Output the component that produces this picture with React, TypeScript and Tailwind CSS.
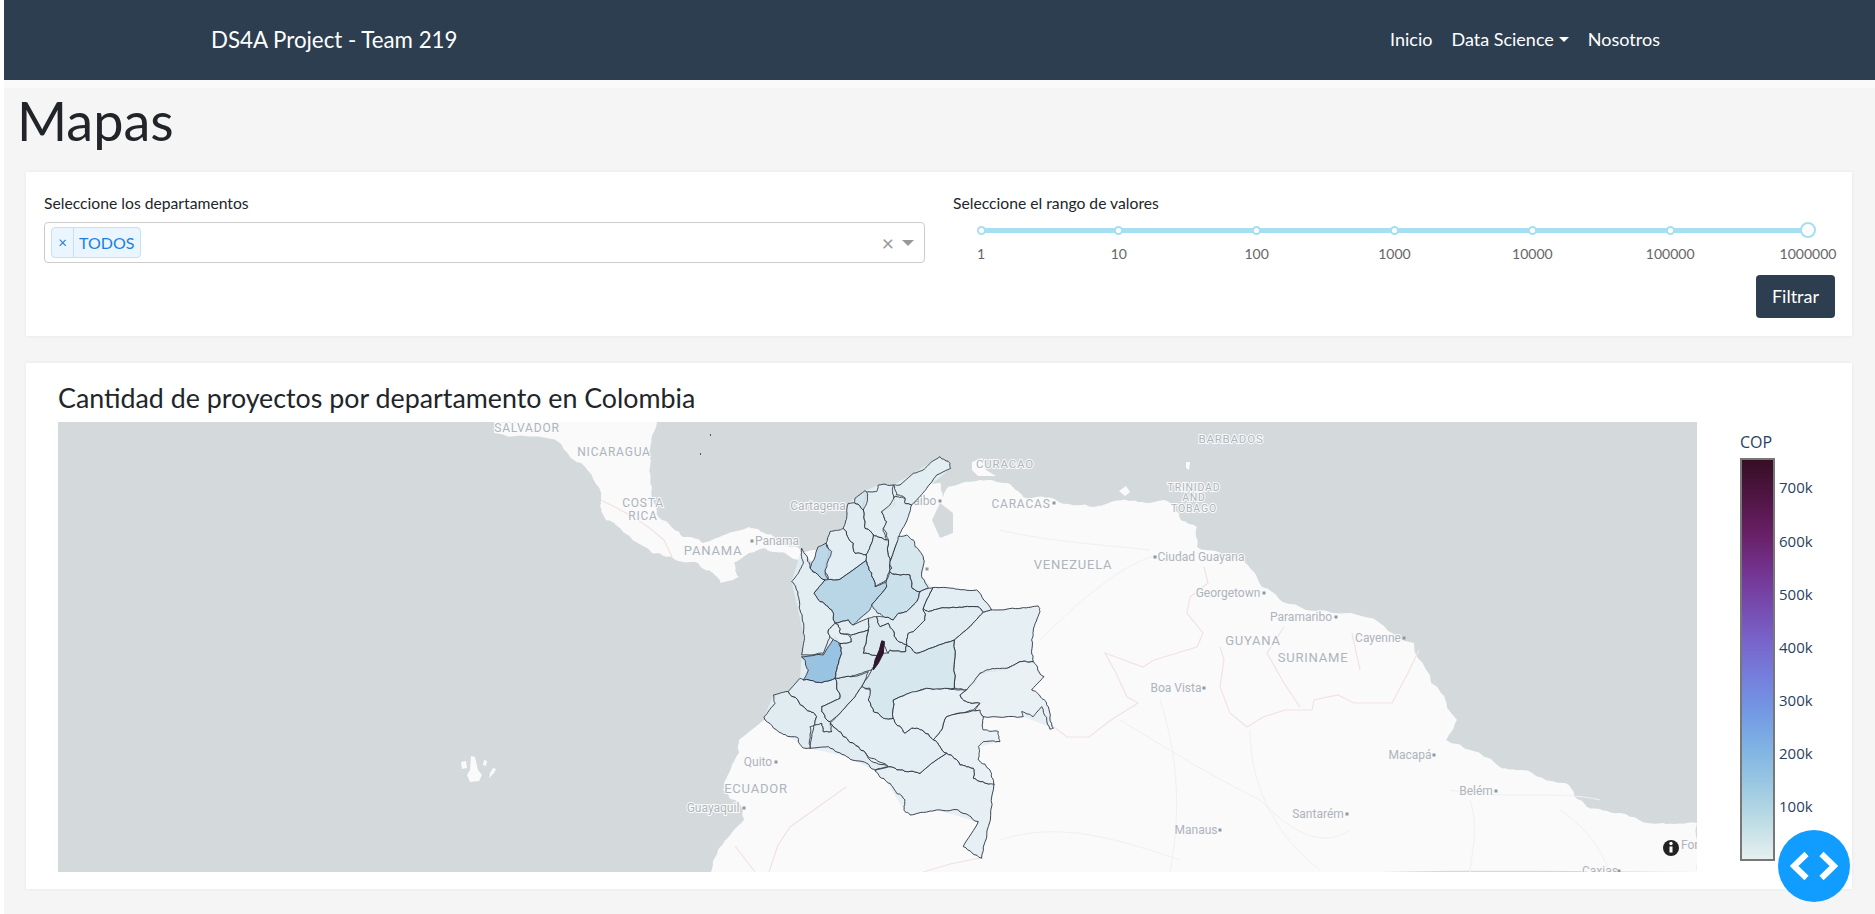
const ticks = ["1", "10", "100", "1000", "10000", "100000", "1000000"];
const legend = ["700k", "600k", "500k", "400k", "300k", "200k", "100k"];

// page coordinates for the basemap
const land = [
  "494,422 657,422 649,453 652,487 662,520 683,537 703,543 729,533 749,527 764,533 785,545 805,552 830,600 830,650 810,700 764,720 739,740 739,753 729,773 723,790 739,803 744,820 734,830 718,850 711,872 1697,872 1697,823 1663,823 1620,813 1587,807 1565,783 1522,770 1495,763 1446,740 1457,720 1441,693 1414,643 1365,617 1300,607 1262,587 1240,560 1197,547 1197,527 1181,520 1164,500 1126,500 1094,507 1056,500 1023,497 1007,483 980,480 948,487 943,497 940,483 928,483 900,520 860,540 805,552 802,560 785,553 764,548 749,553 734,563 739,577 721,583 713,573 698,563 672,557 652,553 616,525 606,520 601,500 581,463 560,443 494,433",
  "471,756 475,757 478,770 482,775 479,781 470,782 467,775 470,770",
  "461,762 466,761 467,768 462,769",
  "484,760 487,761 486,766 483,765",
  "493,768 496,769 494,773 491,776 489,778 490,773",
  "972,462 982,458 986,470 996,476 978,476 972,470",
  "1119,491 1126,486 1130,492 1125,496",
  "1178,490 1182,487 1182,493",
  "1186,462 1190,462 1189,470 1186,468",
];
const lake = "940,503 932,520 940,538 953,533 953,513";

const borders = [
  "M601 500C620 510 640 518 664 540L672 557",
  "M846 787 790 827 778 845 769 872",
  "M735 846 755 872",
  "M980 858 950 864 923 872",
  "M1204 567 1208 583 1190 597 1187 613 1203 633 1197 647 1154 660 1143 667 1105 653 1116 673 1127 697 1138 703 1111 720 1089 737 1067 737 1045 720",
  "M1220 647 1224 660 1220 687 1230 713 1247 727 1263 717 1285 710 1312 710 1314 700 1338 695 1354 703 1392 703 1408 673 1419 650",
  "M1284 627 1267 653 1284 683 1300 707",
  "M1360 670 1352 633",
];
const roads = [
  "M1040 640C1090 590 1130 560 1160 555",
  "M1000 530C1040 540 1100 545 1150 550",
  "M1120 720C1170 750 1200 770 1260 800 1290 830 1320 850 1350 830",
  "M1160 700C1180 760 1180 820 1170 872",
  "M1250 730C1250 790 1280 840 1320 870",
  "M1450 790C1500 800 1560 790 1600 800",
  "M1470 800C1480 830 1470 860 1470 872",
  "M1000 840C1060 820 1120 840 1180 860",
  "M1560 810C1590 830 1600 850 1610 872",
];

const labels: [string, number, number, number][] = [
  ["SALVADOR", 527, 432, 12],
  ["NICARAGUA", 614, 456, 12],
  ["COSTA", 643, 507, 12],
  ["RICA", 643, 520, 12],
  ["PANAMA", 713, 555, 13],
  ["Panama", 777, 545, 12],
  ["Cartagena", 818, 510, 12],
  ["Quito", 758, 766, 12],
  ["ECUADOR", 756, 793, 13],
  ["Guayaquil", 713, 812, 12],
  ["BARBADOS", 1231, 443, 11.5],
  ["CURACAO", 1005, 468, 11.5],
  ["TRINIDAD", 1194, 491, 10.5],
  ["AND", 1194, 501, 10.5],
  ["TOBAGO", 1194, 512, 10.5],
  ["CARACAS", 1021, 508, 12],
  ["Maracaibo", 908, 505, 12],
  ["VENEZUELA", 1073, 569, 13],
  ["Ciudad Guayana", 1201, 561, 12],
  ["Georgetown", 1228, 597, 12],
  ["Paramaribo", 1301, 621, 12],
  ["GUYANA", 1253, 645, 13],
  ["SURINAME", 1313, 662, 13],
  ["Cayenne", 1378, 642, 12],
  ["Boa Vista", 1176, 692, 12],
  ["Macapá", 1410, 759, 12],
  ["Belém", 1476, 795, 12],
  ["Santarém", 1318, 818, 12],
  ["Manaus", 1196, 834, 12],
  ["Caxias", 1600, 875, 12],
  ["COLOMBIA", 917, 662, 13],
];
const cities = [
  [752, 541], [776, 762], [744, 808], [1054, 503], [940, 501], [1155, 557],
  [1264, 593], [1336, 617], [1404, 638], [1204, 688], [1434, 755], [1496, 791],
  [1347, 814], [1220, 830], [1619, 871], [927, 569],
];

// everything below is traced from the 3x crop of Colombia (origin at 740,440)
const outline =
  "600,50 632,85 560,145 515,195 480,280 475,290 500,285 550,350 545,410 578,443 710,450 755,510 895,498 875,600 880,665 912,710 875,750 925,800 940,865 850,830 730,830 730,870 780,905 715,920 715,960 762,1035 725,1255 670,1220 715,1145 590,1110 495,1115 440,1025 405,992 320,950 210,925 125,880 72,832 100,765 145,755 180,715 185,650 190,580 155,425 185,325 210,385 235,320 258,310 270,275 310,265 320,235 325,190 345,175 375,152 415,135 460,135 520,100";

const departments: [string, string][] = [
  ["#e3eef3", "600,50 630,70 632,85 590,105 560,145 530,180 515,195 495,190 495,175 470,165 460,135 480,135 520,100 550,90 575,65"],
  ["#e3eef3", "460,135 415,135 410,155 380,155 370,210 375,265 400,285 440,300 430,265 440,245 425,215 465,195 460,165"],
  ["#e0ecf1", "465,168 495,175 495,190 515,195 505,230 480,280 470,310 450,365 455,385 450,390 445,300 430,265 440,245 425,215 450,195"],
  ["#d2e4ec", "345,175 375,152 383,165 380,190 370,210 345,190"],
  ["#e0ecf1", "325,190 345,190 370,210 375,265 400,285 390,320 378,345 345,340 340,310 310,265 320,235"],
  ["#dbe9ef", "400,285 440,300 445,300 450,390 440,420 405,440 395,400 378,362 378,345 390,320"],
  ["#e3eef3", "270,275 300,270 310,265 340,310 345,340 378,345 378,362 300,418 265,418 255,395 265,340 258,310"],
  ["#b8d6e6", "258,310 275,335 265,360 255,395 265,420 255,420 210,385 235,320"],
  ["#b5d4e4", "378,362 395,400 405,440 440,425 440,440 395,495 390,510 360,535 340,555 325,540 285,550 275,510 240,485 222,460 255,420 265,418 300,418"],
  ["#c8dee8", "450,395 480,405 510,405 515,440 540,455 530,485 500,515 475,520 460,540 430,530 400,505 395,495 440,440 440,420"],
  ["#d6e6ed", "475,290 500,285 520,300 525,320 550,350 545,410 565,445 540,455 515,440 510,405 480,405 450,395 450,390 455,385 450,365 470,310"],
  ["#e3eef3", "578,443 640,445 710,450 755,510 730,517 710,500 650,503 600,505 565,515 550,505"],
  ["#e0ecf1", "565,445 578,443 550,505 555,540 520,575 505,580 500,615 470,600 445,550 420,560 410,530 430,530 460,540 475,520 500,515 530,485 540,455"],
  ["#dfebf0", "550,505 565,515 600,505 650,503 710,500 730,517 690,560 643,600 570,625 530,640 500,615 505,580 520,575 555,540"],
  ["#e6eff3", "730,517 760,510 850,503 895,498 900,515 880,570 875,600 880,665 840,665 790,690 720,700 705,730 680,750 643,745 643,600 690,560"],
  ["#dbe9ef", "385,535 410,530 420,560 445,550 470,600 500,615 497,635 450,630 445,640 433,605 425,603 415,650 370,640 385,570"],
  ["#d6e6ed", "500,615 530,640 570,625 643,600 643,745 560,745 510,760 460,780 460,835 430,835 400,815 385,780 390,745 365,740 395,690 410,670 430,640 445,640 450,630 497,635"],
  ["#e6f0f4", "460,780 520,755 560,745 643,748 680,750 660,765 680,785 720,790 700,810 620,830 605,870 580,900 545,870 515,865 495,880 470,855 460,835"],
  ["#e9f1f4", "680,750 720,700 740,690 800,685 840,665 880,665 912,710 875,750 905,775 925,800 940,865 930,868 905,800 880,830 845,815 850,830 730,830 705,810 720,790 680,785 660,765"],
  ["#e9f1f4", "720,810 730,830 730,870 775,875 780,905 730,905 715,920 715,960 750,990 762,1035 735,1030 700,1015 700,985 660,975 620,940 580,900 605,870 620,830"],
  ["#e6eff3", "620,940 660,975 700,985 700,1015 735,1030 762,1032 745,1160 725,1255 670,1220 715,1145 655,1110 590,1110 510,1125 495,1115 495,1080 470,1060 440,1025 405,992 445,980 500,995 540,1000 575,970"],
  ["#e3eef3", "365,740 390,750 385,780 400,815 430,835 460,835 470,855 495,880 515,865 545,870 580,900 620,940 575,970 540,1000 500,995 445,980 395,955 355,920 310,890 270,850 295,825 345,770"],
  ["#e0ecf1", "270,850 310,890 355,920 390,960 445,980 405,990 380,970 320,950 265,920 210,925 220,855 245,850 250,875 275,875"],
  ["#dfebf0", "72,832 105,790 100,765 145,755 195,805 230,830 225,855 210,860 210,925 185,920 175,895 125,880"],
  ["#e0ecf1", "180,715 190,720 245,728 285,715 300,775 245,800 245,815 270,845 275,875 250,875 245,850 225,855 230,830 195,805 145,755"],
  ["#dbe9ef", "285,715 330,710 360,705 385,695 365,740 345,770 295,825 270,845 245,815 245,800 300,775"],
  ["#e3eef3", "185,325 210,375 210,385 255,420 222,460 240,485 275,510 285,550 265,570 270,590 250,640 185,645 190,580 180,510 175,470 155,425 175,400 190,370"],
  ["#93bfe0", "185,650 250,645 285,590 305,640 285,715 245,728 190,720 205,690"],
  ["#e3eef3", "285,550 325,540 340,555 385,535 385,570 335,585 300,580 295,555"],
  ["#e6eff3", "265,570 285,550 295,555 300,580 330,590 335,605 300,610 270,590"],
  ["#dbe9ef", "300,610 335,605 330,590 335,585 385,570 370,640 415,650 395,690 365,700 330,710 285,715 305,640"],
];

// break straight edges up so the borders look traced; the offset only depends
// on the midpoint, so neighbouring departments still share the same line
function rough(points: string, passes = 3, amp = 3) {
  let pts = points.split(" ").map((p) => p.split(",").map(Number));
  for (let n = 0; n < passes; n++) {
    const next: number[][] = [];
    pts.forEach((p, i) => {
      const q = pts[(i + 1) % pts.length];
      const mx = (p[0] + q[0]) / 2;
      const my = (p[1] + q[1]) / 2;
      const len = Math.hypot(q[0] - p[0], q[1] - p[1]);
      const seed = Math.round(mx) * 12.9898 + Math.round(my) * 78.233;
      const off = Math.sin(seed) * Math.min(len * 0.1, amp);
      next.push(p, [mx + off, my - off * 0.8]);
    });
    pts = next;
  }
  return pts.map((p) => p.map((v) => v.toFixed(1)).join(",")).join(" ");
}

function MapChart() {
  return (
    <svg viewBox="58 422 1639 450" className="block h-[450px] w-[1639px] shrink-0 bg-[#d4dadc]">
      {land.map((p, i) => (
        <polygon key={i} points={i === 0 ? rough(p, 3, 2.5) : p} fill="#fafafa" />
      ))}
      <polygon points={lake} fill="#d4dadc" />
      {roads.map((d, i) => (
        <path key={i} d={d} fill="none" stroke="#f0f0f0" strokeWidth="1" />
      ))}
      {borders.map((d, i) => (
        <path key={i} d={d} fill="none" stroke="#f3e2e2" strokeWidth="1.2" />
      ))}
      {labels.map(([text, x, y, size]) => (
        <text
          key={text}
          x={x}
          y={y}
          textAnchor="middle"
          fontSize={size}
          letterSpacing={text === text.toUpperCase() ? 0.8 : 0}
          fill="#adb4bc"
          stroke="#fafafa"
          strokeWidth="2"
          paintOrder="stroke"
          fontFamily="Roboto, sans-serif"
        >
          {text}
        </text>
      ))}
      <text x="1681" y="849" fontSize="12" fill="#adb4bc" fontFamily="Roboto, sans-serif">
        For
      </text>
      {cities.map(([x, y]) => (
        <rect key={`${x}-${y}`} x={x - 1.5} y={y - 1.5} width="3" height="3" fill="#8f97a1" />
      ))}
      <g transform="translate(740 440) scale(0.3333)">
        <polygon points={outline} fill="#e3eef3" fillOpacity="0.9" />
        {departments.map(([fill, points], i) => (
          <polygon
            key={i}
            points={rough(points)}
            fill={fill}
            fillOpacity="0.92"
            stroke="#232a38"
            strokeWidth="2.6"
            strokeLinejoin="round"
          />
        ))}
        <polygon points="425,603 433,605 430,640 415,670 400,690 405,660 418,630" fill="#2f1530" stroke="#2d1a2d" strokeWidth="3" />
      </g>
      <rect x="710" y="434" width="1" height="2" fill="#555" />
      <rect x="700" y="453" width="1" height="2" fill="#555" />
      <circle cx="1671" cy="848" r="8" fill="#222" />
      <rect x="1669.5" y="846.5" width="3" height="6" fill="#fff" />
      <circle cx="1671" cy="843.5" r="1.7" fill="#fff" />
    </svg>
  );
}

export default function App() {
  return (
    <div className="min-h-[914px] bg-white pl-1 font-['Lato',sans-serif] text-[#212529]">
      <nav className="flex h-20 items-center justify-between bg-[#2c3e50] pl-[207px] pr-[215px] text-white">
        <span className="text-[22.3px]">DS4A Project - Team 219</span>
        <div className="flex items-center gap-[19px] pb-[2px] text-[18px]">
          <span>Inicio</span>
          <span className="flex items-center">
            Data Science
            <span className="ml-[5px] border-x-[5px] border-t-[5px] border-x-transparent border-t-white" />
          </span>
          <span>Nosotros</span>
        </div>
      </nav>

      <main className="h-[834px] bg-[#f5f5f5]">
        <div className="h-2 bg-[#fafafa]" />
        <h1 className="ml-[13px] text-[54px] font-normal leading-[66px]">Mapas</h1>

        <section className="ml-[22px] mt-[18px] grid h-[164px] w-[1826px] grid-cols-[909px_1fr] bg-white pl-[18px] pr-[17px] pt-[20px] shadow-[0_0_4px_rgba(0,0,0,0.06)]">
          <div>
            <label className="block text-[15.7px] leading-[22px]">Seleccione los departamentos</label>
            <div className="mt-[8px] flex h-[41px] w-[881px] items-center rounded border border-[#ccc] pl-[6px] pr-[10px]">
              <div className="flex h-[31px] w-[90px] items-center rounded-sm border border-[#c2e0ff] bg-[#ebf5ff] text-[#1a7fe0]">
                <span className="flex h-full w-[22px] items-center justify-center border-r border-[#c2e0ff] text-[15px]">×</span>
                <span className="pl-[5px] text-[16px]">TODOS</span>
              </div>
              <span className="ml-auto text-[21px] leading-none text-[#999]">×</span>
              <span className="ml-[8px] border-x-[6px] border-t-[6px] border-x-transparent border-t-[#999]" />
            </div>
          </div>

          <div>
            <label className="block text-[15.7px] leading-[22px]">Seleccione el rango de valores</label>
            <div className="relative ml-[28px] mr-[27px] mt-[8px] flex h-[40px] justify-between">
              <div className="absolute left-0 right-0 top-[6px] h-[5px] bg-[#a6dff2]" />
              {ticks.map((t, i) => (
                <div key={t} className="relative flex w-0 flex-col items-center">
                  <span
                    className={
                      i === ticks.length - 1
                        ? "h-[16px] w-[16px] shrink-0 rounded-full border-2 border-[#a6dff2] bg-white"
                        : "mt-[4px] h-[9px] w-[9px] shrink-0 rounded-full border-2 border-[#a6dff2] bg-white"
                    }
                  />
                  <span
                    className={
                      i === ticks.length - 1
                        ? "mt-[6px] whitespace-nowrap text-[14px] leading-[20px] text-[#666]"
                        : "mt-[9px] whitespace-nowrap text-[14px] leading-[20px] text-[#666]"
                    }
                  >
                    {t}
                  </span>
                </div>
              ))}
            </div>
            <div className="mt-[13px] flex justify-end">
              <button className="h-[43px] w-[79px] rounded bg-[#2c3e50] text-[18px] text-white">Filtrar</button>
            </div>
          </div>
        </section>

        <section className="ml-[22px] mt-[27px] h-[526px] w-[1826px] bg-white px-[32px] pt-[11px] shadow-[0_0_4px_rgba(0,0,0,0.06)]">
          <h2 className="text-[26.8px] leading-[48px]">Cantidad de proyectos por departamento en Colombia</h2>
          <div className="flex">
            <MapChart />
            <div className="ml-[43px] font-['Open_Sans',sans-serif] text-[15px] text-[#2a3f5f]">
              <div className="h-[36px] pt-[10px] text-[16px] leading-[20px]">COP</div>
              <div className="flex">
                <div className="h-[403px] w-[35px] border-2 border-[#777] bg-[linear-gradient(to_top,#e6f0f0,#bfdde5,#9cc9e2,#81b4e3,#739ae4,#757fdd,#7864ca,#774aaf,#73328d,#671f65,#501543,#360e24)]" />
                <div className="ml-[4px] pt-[3px]">
                  {legend.map((l) => (
                    <div key={l} className="flex h-[53.2px] items-center">
                      {l}
                    </div>
                  ))}
                </div>
              </div>
            </div>
          </div>
        </section>
      </main>

      <button className="fixed bottom-[12px] left-[1778px] flex h-[72px] w-[72px] items-center justify-center rounded-full bg-[#119dff]">
        <svg viewBox="0 0 48 30" className="h-[30px] w-[48px]" fill="none" stroke="#fff" strokeWidth="6">
          <path d="M16.5 3 4 15 16.5 27" />
          <path d="M31.5 3 44 15 31.5 27" />
        </svg>
      </button>
    </div>
  );
}
